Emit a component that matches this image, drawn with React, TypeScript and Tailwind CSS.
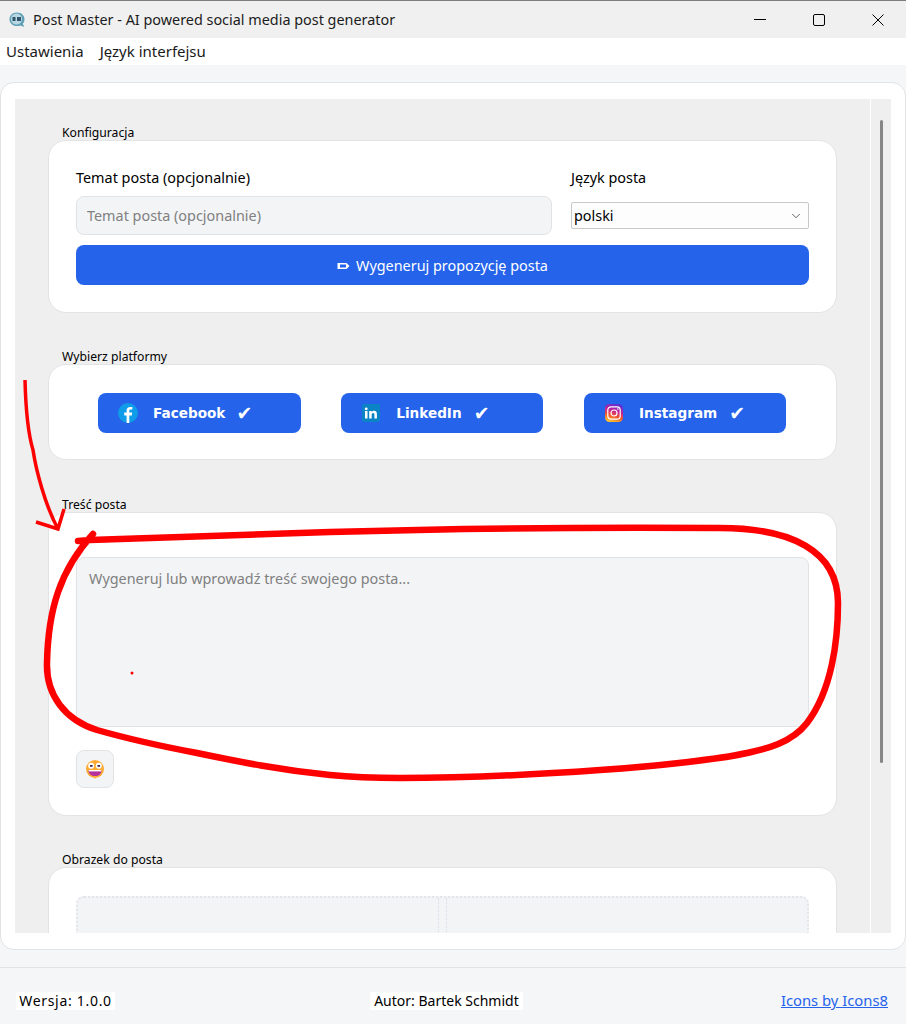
import React from 'react';
import { ChevronDown } from 'lucide-react';

const font = 'font-["Noto_Sans",sans-serif]';

const AppIcon = () => (
  <svg width="18" height="18" viewBox="0 0 18 18">
    <path d="M9 1.500c4.400 0 7.500 2.900 7.500 6.800 0 1.800-.6 3.300-1.700 4.500l1.400 3.200-3.900-1.500c-1 .4-2.200.6-3.300.6-4.400 0-7.500-2.900-7.500-6.800S4.600 1.500 9 1.500z" fill="#5f9fb5" />
    <circle cx="8.500" cy="8" r="5.600" fill="#b9d7e2" />
    <rect x="4.500" y="6" width="3" height="4" fill="#31566b" />
    <rect x="9" y="6" width="4" height="4" fill="#31566b" />
  </svg>
);

const FacebookIcon = () => (
  <svg width="20" height="20" viewBox="0 0 20 20">
    <circle cx="10" cy="10" r="10" fill="#0f9ce8" />
    <path d="M11.300 20v-7.500h2.500l.4-2.900h-2.900V7.900c0-.9.300-1.400 1.500-1.400h1.500V4c-.4-.1-1.200-.1-2.100-.1-2.200 0-3.600 1.300-3.600 3.700v2H6.200v2.900h2.400V20z" fill="#fff" />
  </svg>
);

const LinkedinIcon = () => (
  <svg width="18" height="18" viewBox="0 0 18 18">
    <rect width="18" height="18" rx="2" fill="#0b84c6" />
    <rect x="3" y="7" width="2.500" height="7.500" fill="#fff" />
    <circle cx="4.250" cy="4.800" r="1.400" fill="#fff" />
    <path d="M7.200 7h2.400v1.100c.4-.7 1.200-1.300 2.400-1.300 2.300 0 2.900 1.500 2.900 3.500v4.200h-2.500v-3.700c0-1-.2-1.800-1.200-1.800s-1.500.8-1.500 1.800v3.700H7.200z" fill="#fff" />
  </svg>
);

const InstagramIcon = () => (
  <svg width="18" height="18" viewBox="0 0 18 18">
    <defs>
      <linearGradient id="ig" x1="0.300" y1="1" x2="0.600" y2="0">
        <stop offset="0" stopColor="#fdc92f" />
        <stop offset="0.350" stopColor="#f5542e" />
        <stop offset="0.650" stopColor="#c31f9b" />
        <stop offset="1" stopColor="#5a2fd6" />
      </linearGradient>
    </defs>
    <rect width="18" height="18" rx="4.500" fill="url(#ig)" />
    <rect x="2.800" y="2.800" width="12.400" height="12.400" rx="3.200" fill="none" stroke="#fff" strokeWidth="1.200" />
    <circle cx="9" cy="9" r="3" fill="none" stroke="#fff" strokeWidth="1.200" />
    <circle cx="12.900" cy="5.100" r="0.800" fill="#fff" />
  </svg>
);

const EmojiIcon = () => (
  <svg width="18" height="19" viewBox="0 0 18 19">
    <circle cx="9" cy="9" r="9" fill="#fdab35" />
    <circle cx="5.200" cy="5.800" r="3" fill="#fff" />
    <circle cx="12.800" cy="5.800" r="3" fill="#fff" />
    <rect x="4" y="5" width="2.600" height="1.800" fill="#3b2a4a" />
    <rect x="11.500" y="5" width="2.600" height="1.800" fill="#3b2a4a" />
    <path d="M2.500 10.200h13c0 4-2.800 5.800-6.500 5.800s-6.500-1.800-6.500-5.800z" fill="#b5309a" />
    <rect x="2.800" y="10" width="12.400" height="1.400" fill="#fff" />
    <path d="M8 17.500h2L9 19z" fill="#fdab35" />
  </svg>
);

const PencilIcon = () => (
  <svg width="13" height="8" viewBox="0 0 13 8">
    <path d="M.5 1h9l3 3-3 3h-9z" fill="#fff" />
    <rect x="3" y="2.500" width="6" height="3" fill="#2563eb" />
  </svg>
);

const Section = ({ title, className, children }: { title: string; className: string; children: React.ReactNode }) => (
  <section>
    <h2 className="h-4 pl-[14px] text-[12.2px] leading-[18px] text-black">{title}</h2>
    <div className={`rounded-[18px] border border-[#e2e3e5] bg-white px-[27px] ${className}`}>{children}</div>
  </section>
);

const platforms = [
  { name: 'Facebook', icon: <FacebookIcon />, iconBox: 'pl-5', gap: 'gap-[15px]' },
  { name: 'LinkedIn', icon: <LinkedinIcon />, iconBox: 'pl-[21px]', gap: 'gap-[16px]' },
  { name: 'Instagram', icon: <InstagramIcon />, iconBox: 'pl-[21px]', gap: 'gap-[16px]' },
];

const App: React.FC = () => {
  return (
    <div className={`relative flex h-[1024px] w-[906px] flex-col overflow-hidden bg-[#f5f6f8] text-black ${font}`}>
      {/* title bar */}
      <div className="flex h-[38px] shrink-0 items-center border-t border-[#7c7c7c] bg-[#f0f0f0] pl-2">
        <AppIcon />
        <span className="ml-[7px] text-[14.4px] text-[#1c1c1c]">Post Master - AI powered social media post generator</span>
        <div className="ml-auto flex items-center">
          <div className="mr-[47px] h-px w-[12px] bg-black" />
          <div className="mr-[47px] h-[12px] w-[12px] rounded-[2px] border border-black" />
          <svg width="12" height="12" viewBox="0 0 12 12" className="mr-[22px]">
            <path d="M.5.5l11 11M11.500.5l-11 11" stroke="#000" fill="none" />
          </svg>
        </div>
      </div>

      {/* menu */}
      <div className="flex h-[27px] shrink-0 items-center gap-4 bg-white pb-px pl-[6px] text-[15px] text-[#1a1a1a]">
        <span>Ustawienia</span>
        <span>Język interfejsu</span>
      </div>

      {/* main card */}
      <div className="mt-[17px] flex h-[868px] shrink-0 rounded-[14px] border border-[#e2e3e5] bg-white px-[14px] py-4">
        <div className="flex min-w-0 flex-1 flex-col gap-[35px] overflow-hidden bg-[#efefef] pt-[25px] pr-[33px] pl-[33px]">
          <Section title="Konfiguracja" className="h-[173px] shrink-0 pt-[27px]">
            <div className="grid grid-cols-[476px_238px] gap-x-[19px]">
              <div>
                <div className="flex h-[20px] items-center text-[14.4px]">Temat posta (opcjonalnie)</div>
                <div className="mt-[8px] flex h-[39px] items-center rounded-lg border border-[#e2e3e5] bg-[#f3f4f6] pl-[10px] text-[14.4px] text-[#808080]">
                  Temat posta (opcjonalnie)
                </div>
              </div>
              <div>
                <div className="flex h-[20px] items-center text-[14.4px]">Język posta</div>
                <div className="mt-[14px] flex h-[27px] items-center justify-between rounded-[2px] border border-[#c8c8c8] bg-[#fdfdfd] pr-[5px] pl-[2px] text-[14.4px]">
                  polski
                  <ChevronDown size={14} strokeWidth={1.4} color="#444" />
                </div>
              </div>
            </div>
            <div className="mt-[10px] flex h-10 items-center justify-center gap-[6px] rounded-lg bg-[#2563eb] pt-px text-[14.4px] text-white">
              <PencilIcon />
              <span>Wygeneruj propozycję posta</span>
            </div>
          </Section>

          <Section title="Wybierz platformy" className="h-[96px] shrink-0 pt-7 pl-[49px]">
            <div className="grid grid-cols-[202.5px_202px_202px] gap-x-[40.75px]">
              {platforms.map((p) => (
                <div key={p.name} className={`flex h-10 items-center rounded-lg bg-[#2563eb] text-white ${p.iconBox} ${p.gap}`}>
                  {p.icon}
                  <span className='font-["DejaVu_Sans",sans-serif] text-[13.6px] font-bold'>{p.name}</span>
                  <span className='-ml-[4px] font-["DejaVu_Sans",sans-serif] text-[19px] leading-none font-bold'>✔</span>
                </div>
              ))}
            </div>
          </Section>

          <div className="mt-px">
            <Section title="Treść posta" className="h-[304px] pt-[44px]">
              <div className="h-[170px] rounded-lg border border-[#e2e3e5] bg-[#f3f4f6] pt-[10px] pl-3 text-[14.4px] text-[#808080]">
                Wygeneruj lub wprowadź treść swojego posta...
              </div>
              <div className="mt-[23px] flex h-[38px] w-[38px] items-center justify-center rounded-lg border border-[#e2e3e5] bg-[#f3f4f6]">
                <EmojiIcon />
              </div>
            </Section>
          </div>

          <Section title="Obrazek do posta" className="h-[200px] shrink-0 pt-7">
            <div className="grid h-[170px] grid-cols-2 gap-x-[7px] rounded-lg border-2 border-dotted border-[#e3e5ea] bg-[#f3f4f6]">
              <div className="border-r border-dotted border-[#d9dce6]" />
              <div className="border-l border-dotted border-[#d9dce6]" />
            </div>
          </Section>
        </div>

        {/* scrollbar */}
        <div className="ml-px flex w-5 shrink-0 justify-center bg-[#efefef] pt-[21px]">
          <div className="h-[643px] w-[3px] rounded-full bg-[#868686]" />
        </div>
      </div>

      {/* footer */}
      <div className="mt-[17px] flex h-[57px] shrink-0 items-center justify-between border-t border-[#e2e3e5] pt-[9px] pr-[18px] pl-4 text-[14px]">
        <span className="flex h-[18px] w-[99px] items-center justify-center bg-white tracking-[0.7px]">Wersja: 1.0.0</span>
        <span className="ml-[-3px] flex h-[18px] w-[153px] items-center justify-center bg-white">Autor: Bartek Schmidt</span>
        <span className="text-[14.8px] text-[#2563eb] underline">Icons by Icons8</span>
      </div>

      {/* red marker annotation drawn on the screenshot */}
      <svg className="pointer-events-none absolute inset-0" width="906" height="1024" viewBox="0 0 906 1024" fill="none">
        <path d="M25 380C26 420 30 440 33 450C36 470 45 505 58 529M36 522L58 529L64 509" stroke="#ff0000" strokeWidth="3.500" />
        <path
          d="M78 541L90 540C170 537 250 534 330 532C430 529 560 527 720 528C790 528 838 550 838 603C838 640 832 690 807 723C790 745 760 750 747 753C720 759 660 766 600 770C530 775 460 778 400 778C375 778 350 777 330 775C280 770 240 762 197 753C160 746 125 738 97 730C65 720 46 695 47 663C48 610 60 570 93 534"
          stroke="#ff0000"
          strokeWidth="6.500"
          strokeLinecap="round"
        />
        <circle cx="132" cy="673" r="1.500" fill="#ff0000" />
      </svg>
    </div>
  );
};

export default App;
